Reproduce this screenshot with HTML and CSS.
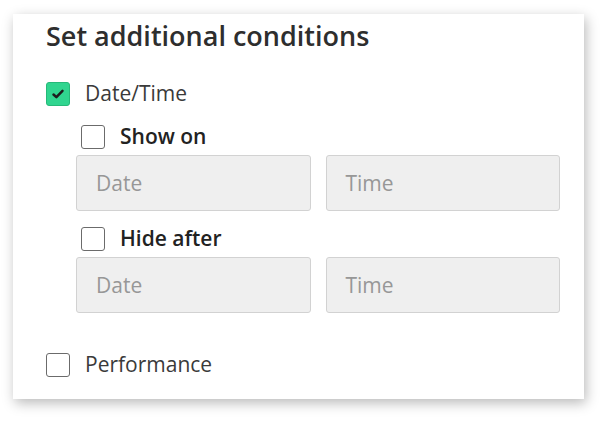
FILE: index.html
```html
<!DOCTYPE html>
<html>
<head>
<meta charset="utf-8">
<link rel="stylesheet" href="styles.css">
</head>
<body>
<div class="card">
  <h2 class="title">Set additional conditions</h2>
  <div class="row main-row">
    <span class="box checked">
      <svg width="14" height="12" viewBox="0 0 14 12"><path d="M2.5 6.5 L5.4 9.2 L11.5 2.8" fill="none" stroke="#1d1d1d" stroke-width="2.5" stroke-linecap="round" stroke-linejoin="round"/></svg>
    </span>
    <span class="label">Date/Time</span>
  </div>
  <div class="sub">
    <div class="row sub-row">
      <span class="box"></span>
      <span class="label strong">Show on</span>
    </div>
    <div class="fields">
      <div class="field">Date</div>
      <div class="field">Time</div>
    </div>
    <div class="row sub-row second">
      <span class="box"></span>
      <span class="label strong">Hide after</span>
    </div>
    <div class="fields">
      <div class="field">Date</div>
      <div class="field">Time</div>
    </div>
  </div>
  <div class="row main-row last">
    <span class="box"></span>
    <span class="label">Performance</span>
  </div>
</div>
</body>
</html>
```
FILE: styles.css
```css
html, body {
  margin: 0;
  padding: 0;
  background: #ffffff;
}
body {
  min-height: 424px;
  padding-top: 14px;
  box-sizing: border-box;
  font-family: "Open Sans", "Liberation Sans", sans-serif;
  color: #333333;
}
.card {
  margin-left: 13px;
  width: 571px;
  height: 385px;
  box-sizing: border-box;
  padding: 6px 24px 0 33px;
  background: #ffffff;
  box-shadow: 2px 4px 12px rgba(0, 0, 0, 0.28);
}
.title {
  margin: 0;
  font-size: 27px;
  font-weight: 600;
  line-height: 32px;
  color: #2e2e2e;
}
.row {
  display: flex;
  align-items: flex-start;
  height: 24px;
}
.main-row {
  margin-top: 30px;
}
.main-row.last {
  margin-top: 40px;
}
.box {
  width: 24px;
  height: 24px;
  box-sizing: border-box;
  border: 1px solid #6b6b6b;
  border-radius: 3px;
  background: #ffffff;
  display: flex;
  align-items: center;
  justify-content: center;
  flex: none;
}
.box.checked {
  background: #30d58f;
  border-color: #26b979;
}
.label {
  margin-left: 15px;
  font-size: 21px;
  line-height: 22px;
  color: #3a3a3a;
}
.label.strong {
  font-weight: 600;
  color: #222222;
}
.sub {
  padding-left: 30px;
}
.sub-row {
  margin-top: 19px;
  padding-left: 5px;
}
.sub-row.second {
  margin-top: 16px;
}
.fields {
  display: flex;
  gap: 15px;
  margin-top: 6px;
}
.field {
  width: 235px;
  height: 56px;
  box-sizing: border-box;
  border: 1px solid #d2d2d2;
  border-radius: 3px;
  background: #efefef;
  padding-left: 19px;
  display: flex;
  align-items: center;
  font-size: 21px;
  color: #979797;
}
```
